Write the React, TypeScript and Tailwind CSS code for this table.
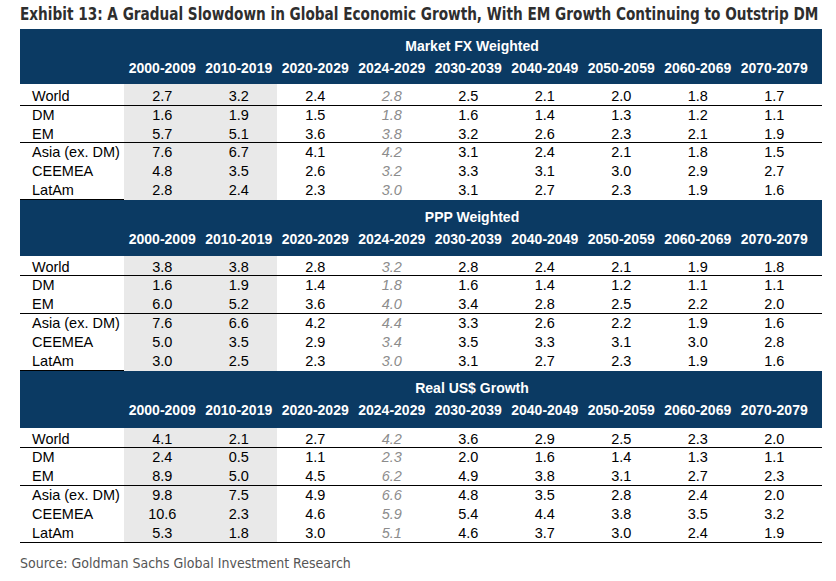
import React from 'react';

const cols = ['2000-2009', '2010-2019', '2020-2029', '2024-2029', '2030-2039', '2040-2049', '2050-2059', '2060-2069', '2070-2079'];
const regions = ['World', 'DM', 'EM', 'Asia (ex. DM)', 'CEEMEA', 'LatAm'];

const sections = [
  {
    title: 'Market FX Weighted',
    headerH: 'h-[55px]',
    last: false,
    heights: ['h-[21px] pt-[4px]', 'h-[19px] pt-[1px]', 'h-[17px] pt-[1px]', 'h-[19px] pt-[1px]', 'h-[19px] pt-[1px]', 'h-[19px] pt-[1px]'],
    rows: [
      ['2.7', '3.2', '2.4', '2.8', '2.5', '2.1', '2.0', '1.8', '1.7'],
      ['1.6', '1.9', '1.5', '1.8', '1.6', '1.4', '1.3', '1.2', '1.1'],
      ['5.7', '5.1', '3.6', '3.8', '3.2', '2.6', '2.3', '2.1', '1.9'],
      ['7.6', '6.7', '4.1', '4.2', '3.1', '2.4', '2.1', '1.8', '1.5'],
      ['4.8', '3.5', '2.6', '3.2', '3.3', '3.1', '3.0', '2.9', '2.7'],
      ['2.8', '2.4', '2.3', '3.0', '3.1', '2.7', '2.3', '1.9', '1.6'],
    ],
  },
  {
    title: 'PPP Weighted',
    headerH: 'h-[56px]',
    last: false,
    heights: ['h-[19px] pt-[3px]', 'h-[19px] pt-[1px]', 'h-[18px] pt-[1px]', 'h-[19px] pt-[1px]', 'h-[19px] pt-[1px]', 'h-[19px] pt-[1px]'],
    rows: [
      ['3.8', '3.8', '2.8', '3.2', '2.8', '2.4', '2.1', '1.9', '1.8'],
      ['1.6', '1.9', '1.4', '1.8', '1.6', '1.4', '1.2', '1.1', '1.1'],
      ['6.0', '5.2', '3.6', '4.0', '3.4', '2.8', '2.5', '2.2', '2.0'],
      ['7.6', '6.6', '4.2', '4.4', '3.3', '2.6', '2.2', '1.9', '1.6'],
      ['5.0', '3.5', '2.9', '3.4', '3.5', '3.3', '3.1', '3.0', '2.8'],
      ['3.0', '2.5', '2.3', '3.0', '3.1', '2.7', '2.3', '1.9', '1.6'],
    ],
  },
  {
    title: 'Real US$ Growth',
    headerH: 'h-[57px]',
    last: true,
    heights: ['h-[19px] pt-[3px]', 'h-[19px] pt-[1px]', 'h-[18px] pt-[1px]', 'h-[19px] pt-[1px]', 'h-[19px] pt-[1px]', 'h-[18px] pt-[1px]'],
    rows: [
      ['4.1', '2.1', '2.7', '4.2', '3.6', '2.9', '2.5', '2.3', '2.0'],
      ['2.4', '0.5', '1.1', '2.3', '2.0', '1.6', '1.4', '1.3', '1.1'],
      ['8.9', '5.0', '4.5', '6.2', '4.9', '3.8', '3.1', '2.7', '2.3'],
      ['9.8', '7.5', '4.9', '6.6', '4.8', '3.5', '2.8', '2.4', '2.0'],
      ['10.6', '2.3', '4.6', '5.9', '5.4', '4.4', '3.8', '3.5', '3.2'],
      ['5.3', '1.8', '3.0', '5.1', '4.6', '3.7', '3.0', '2.4', '1.9'],
    ],
  },
];

const grid = 'grid grid-cols-[104px_repeat(9,76.5px)_1fr]';

function Section({ s }: { s: (typeof sections)[number] }) {
  return (
    <div>
      {/* navy header band */}
      <div className={`${s.headerH} bg-[#0b3a63] text-white font-bold text-[14px] flex flex-col pt-[9px]`}>
        <div className="grid grid-cols-[104px_696px_1fr] leading-[16px]">
          <div />
          <div className="text-center">{s.title}</div>
        </div>
        <div className={`${grid} leading-[16px] mt-[6px]`}>
          <div />
          {cols.map((c) => (
            <div key={c} className="text-center">{c}</div>
          ))}
        </div>
      </div>

      {/* data rows */}
      {s.rows.map((r, i) => {
        const full = i === 0 || i === 2 || (i === 5 && s.last);
        const labelOnly = i === 5 && !s.last;
        const pad = s.heights[i];
        return (
          <div
            key={regions[i]}
            className={`${grid} ${full ? 'border-b border-black' : ''} text-[14.5px] leading-[17px]`}
          >
            <div className={`${pad} pl-3 text-black ${labelOnly ? 'border-b border-black' : ''}`}>{regions[i]}</div>
            {r.map((v, j) => (
              <div
                key={j}
                className={`${pad} text-center ${j < 2 ? 'bg-[#e9e9e9]' : ''} ${j === 3 ? 'italic text-[#8c8c8c]' : 'text-black'}`}
              >
                {v}
              </div>
            ))}
            <div />
          </div>
        );
      })}
    </div>
  );
}

export default function App() {
  return (
    <div className="w-[836px] h-[581px] bg-white overflow-hidden" style={{ fontFamily: '"Liberation Sans", Arial, sans-serif' }}>
      <h1
        className="h-[29px] pl-5 pt-[3px] text-[18px] leading-[22px] font-bold text-[#2e2e2e] whitespace-nowrap"
        style={{ fontFamily: '"DejaVu Sans Condensed", sans-serif' }}
      >
        <span className="inline-block origin-left scale-x-[0.842]">
          Exhibit 13: A Gradual Slowdown in Global Economic Growth, With EM Growth Continuing to Outstrip DM
        </span>
      </h1>
      <div className="ml-5 w-[802px]">
        {sections.map((s) => (
          <Section key={s.title} s={s} />
        ))}
      </div>
      <p
        className="pl-5 mt-[10px] text-[14px] leading-[20px] text-[#555555]"
        style={{ fontFamily: '"DejaVu Sans Condensed", sans-serif' }}
      >
        Source: Goldman Sachs Global Investment Research
      </p>
    </div>
  );
}
